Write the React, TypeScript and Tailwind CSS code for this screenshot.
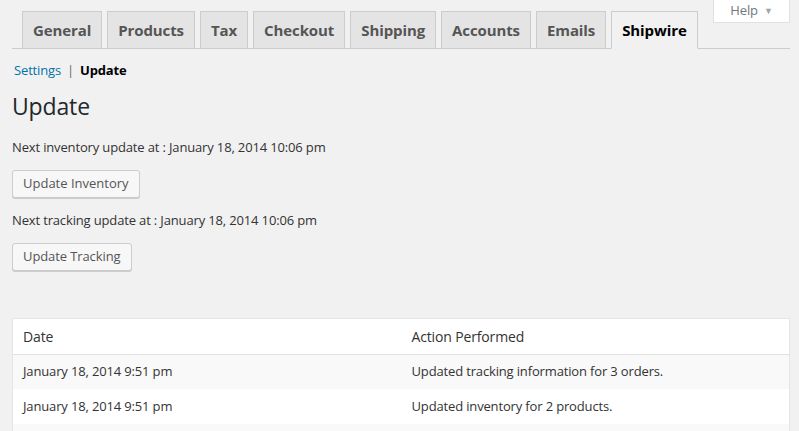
const tabs = ["General", "Products", "Tax", "Checkout", "Shipping", "Accounts", "Emails", "Shipwire"]

const log = [
  { date: "January 18, 2014 9:51 pm", action: "Updated tracking information for 3 orders." },
  { date: "January 18, 2014 9:51 pm", action: "Updated inventory for 2 products." },
  { date: "", action: "" },
]

export default function App() {
  return (
    <div
      className="min-h-[431px] bg-[#f1f1f1] text-[13px] tracking-[-0.15px] text-[#444]"
      style={{ fontFamily: '"Open Sans", "Liberation Sans", sans-serif' }}
    >
      <div className="relative px-[12px] pr-[9px]">
        <div className="absolute right-[9px] top-0 flex h-[23px] w-[77px] items-center justify-center gap-[6px] border border-t-0 border-[#e1e1e1] bg-white text-[13px] text-[#72777c]">
          Help <span className="text-[9px] text-[#a0a5aa]">▼</span>
        </div>
        <nav className="flex gap-[5px] border-b border-[#ccc] pl-[10px] pt-[11px]">
          {tabs.map((t) => {
            const active = t === "Shipwire"
            return (
              <div
                key={t}
                className={
                  active
                    ? "-mb-px flex h-[38px] items-center border border-b-[#f1f1f1] border-[#ccc] bg-[#f1f1f1] px-[10px] text-[15px] font-bold tracking-[-0.1px] text-black"
                    : "flex h-[37px] items-center border border-b-0 border-[#ccc] bg-[#e4e4e4] px-[10px] text-[15px] font-bold tracking-[-0.1px] text-[#555]"
                }
              >
                {t}
              </div>
            )
          })}
        </nav>
        <div className="mt-[12px] flex items-center pl-[2px] text-[13px]">
          <span className="text-[#0073aa]">Settings</span>
          <span className="mx-[6px] text-[#666]">|</span>
          <span className="font-bold text-black">Update</span>
        </div>
        <h2 className="mt-[11px] text-[23px] leading-[28px] text-[#23282d]">Update</h2>
        <p className="mt-[18px] text-[#333]">Next inventory update at : January 18, 2014 10:06 pm</p>
        <button className="mt-[13px] h-[28px] rounded-[3px] border border-[#ccc] bg-[#f7f7f7] px-[10px] text-[13px] tracking-normal text-[#555] shadow-[0_1px_0_#ccc]">
          Update Inventory
        </button>
        <p className="mt-[13px] text-[#333]">Next tracking update at : January 18, 2014 10:06 pm</p>
        <button className="mt-[12px] h-[28px] rounded-[3px] border border-[#ccc] bg-[#f7f7f7] px-[10px] text-[13px] tracking-[-0.1px] text-[#555] shadow-[0_1px_0_#ccc]">
          Update Tracking
        </button>
        <table className="mt-[47px] w-full border border-[#e5e5e5] bg-white text-left text-[13px] text-[#333]">
          <thead>
            <tr className="border-b border-[#e1e1e1]">
              <th className="h-[36px] w-[389px] pl-[10px] text-[14px] font-normal">Date</th>
              <th className="h-[36px] pl-[10px] text-[14px] font-normal">Action Performed</th>
            </tr>
          </thead>
          <tbody>
            {log.map((r, i) => (
              <tr key={i} className={i % 2 === 0 ? "bg-[#f9f9f9]" : "bg-white"}>
                <td className="h-[35px] pl-[10px]">{r.date}</td>
                <td className="h-[35px] pl-[10px]">{r.action}</td>
              </tr>
            ))}
          </tbody>
        </table>
      </div>
    </div>
  )
}
